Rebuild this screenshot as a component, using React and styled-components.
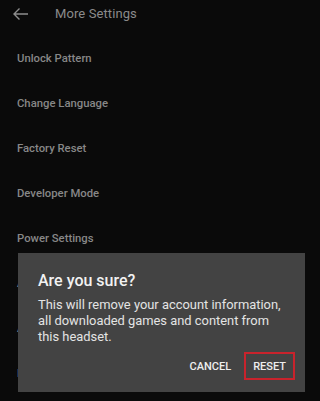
import React from "react";
import styled, { createGlobalStyle } from "styled-components";

const GlobalStyle = createGlobalStyle`
  html, body {
    margin: 0;
    padding: 0;
    background: #0a0a0a;
  }
  body {
    font-family: Roboto, "Liberation Sans", sans-serif;
  }
`;

const Screen = styled.div`
  position: relative;
  width: 320px;
  height: 401px;
  overflow: hidden;
  background: #0a0a0a;
`;

const Header = styled.div`
  display: flex;
  align-items: center;
  height: 27px;
  padding-left: 12px;
`;

const BackButton = styled.div`
  display: flex;
  align-items: center;
  width: 43px;
  color: #8d8d8d;
`;

const Title = styled.div`
  font-size: 13px;
  color: #8a8a8a;
  letter-spacing: 0.1px;
`;

const List = styled.div`
  display: flex;
  flex-direction: column;
  padding-top: 9px;
`;

const Item = styled.div`
  display: flex;
  align-items: center;
  height: 45px;
  padding-left: 17px;
  font-size: 11.3px;
  font-weight: 500;
  color: #878787;
`;

const Dialog = styled.div`
  position: absolute;
  left: 18px;
  top: 253px;
  width: 287px;
  height: 139px;
  box-sizing: border-box;
  background: #434343;
  padding: 18px 10px 0 20px;
  display: flex;
  flex-direction: column;
`;

const DialogTitle = styled.div`
  font-size: 16px;
  font-weight: 500;
  color: #f2f2f2;
  margin-bottom: 7px;
`;

const DialogBody = styled.div`
  font-size: 12.9px;
  line-height: 16px;
  color: #e4e4e4;
  padding-right: 4px;
`;

const Actions = styled.div`
  display: flex;
  justify-content: flex-end;
  align-items: center;
  gap: 13px;
  margin-top: auto;
  margin-bottom: 12px;
`;

const ActionButton = styled.div`
  display: flex;
  align-items: center;
  justify-content: center;
  height: 28px;
  box-sizing: border-box;
  padding: 0 ${(p) => (p.$outlined ? "7px" : "0")};
  border: ${(p) => (p.$outlined ? "2px solid #c8232c" : "none")};
  font-size: 11px;
  font-weight: 500;
  color: #eeeeee;
`;

const items = [
  "Unlock Pattern",
  "Change Language",
  "Factory Reset",
  "Developer Mode",
  "Power Settings",
  "About",
  "Accounts",
  "Legal",
];

const App = () => {
  return (
    <Screen>
      <GlobalStyle />
      <Header>
        <BackButton>
          <svg width="17" height="14" viewBox="0 0 17 14" fill="none">
            <path
              d="M16 7H2M7.5 1.5L2 7l5.5 5.5"
              stroke="currentColor"
              strokeWidth="1.4"
            />
          </svg>
        </BackButton>
        <Title>More Settings</Title>
      </Header>
      <List>
        {items.map((label) => (
          <Item key={label}>{label}</Item>
        ))}
      </List>
      <Dialog>
        <DialogTitle>Are you sure?</DialogTitle>
        <DialogBody>
          This will remove your account information, all downloaded games and
          content from this headset.
        </DialogBody>
        <Actions>
          <ActionButton>CANCEL</ActionButton>
          <ActionButton $outlined>RESET</ActionButton>
        </Actions>
      </Dialog>
    </Screen>
  );
};

export default App;
